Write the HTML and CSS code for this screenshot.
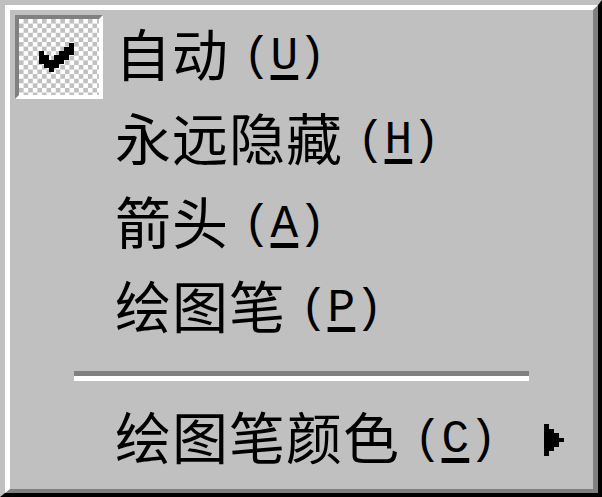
FILE: index.html
```html
<!DOCTYPE html>
<html>
<head>
    <meta charset="utf-8">
    <title>墨迹菜单</title>
    <link rel="stylesheet" href="styles.css">
</head>
<body>

<div class="menu">
    <div class="menu-inner">
        <div class="item">
            <span class="check-cell checked">
                <svg class="check" viewBox="0 0 7 7" preserveAspectRatio="none" shape-rendering="crispEdges">
                    <path d="M6 0H7V3H6V4H5V5H4V6H3V7H2V6H1V5H0V2H1V3H2V4H3V3H4V2H5V1H6Z" fill="#000"/>
                </svg>
            </span>
            <span class="label">自动</span><span class="key">(<u>U</u>)</span>
        </div>
        <div class="item">
            <span class="check-cell"></span>
            <span class="label">永远隐藏</span><span class="key">(<u>H</u>)</span>
        </div>
        <div class="item">
            <span class="check-cell"></span>
            <span class="label">箭头</span><span class="key">(<u>A</u>)</span>
        </div>
        <div class="item">
            <span class="check-cell"></span>
            <span class="label">绘图笔</span><span class="key">(<u>P</u>)</span>
        </div>

        <div class="separator"></div>

        <div class="item">
            <span class="check-cell"></span>
            <span class="label">绘图笔颜色</span><span class="key">(<u>C</u>)</span>
            <svg class="arrow" viewBox="0 0 4 7" preserveAspectRatio="none" shape-rendering="crispEdges">
                <path d="M0 0H1V1H2V2H3V3H4V4H3V5H2V6H1V7H0Z" fill="#000"/>
            </svg>
        </div>
    </div>
</div>

</body>
</html>
```

FILE: styles.css
```css
html, body {
    margin: 0;
    padding: 0;
    background: #c0c0c0;
}
.menu {
    width: 602px;
    height: 497px;
    box-sizing: border-box;
    border-top: 5px solid #c0c0c0;
    border-left: 5px solid #c0c0c0;
    border-right: 4px solid #000;
    border-bottom: 4px solid #000;
    background: #c0c0c0;
}
.menu-inner {
    height: 100%;
    box-sizing: border-box;
    border-top: 5px solid #fff;
    border-left: 5px solid #fff;
    border-right: 5px solid #808080;
    border-bottom: 4px solid #808080;
    padding: 5px 0 0 5px;
    color: #000;
}
.item {
    display: flex;
    align-items: center;
    height: 84px;
    padding-right: 29px;
}
.check-cell {
    width: 88px;
    height: 84px;
    flex: none;
    box-sizing: border-box;
    display: flex;
    align-items: center;
    justify-content: center;
}
.check-cell.checked {
    border-top: 4px solid #808080;
    border-left: 4px solid #808080;
    border-right: 4px solid #fff;
    border-bottom: 4px solid #fff;
    background: repeating-conic-gradient(#c0c0c0 0 25%, #fff 0 50%) 0 0 / 9.2px 9.2px;
}
.check {
    width: 35px;
    height: 29px;
    margin-left: -6px;
}
.label {
    margin-left: 12px;
    margin-bottom: 10px;
    font-family: "Noto Sans CJK SC", sans-serif;
    font-size: 56px;
    line-height: 1;
    letter-spacing: 1px;
}
.key {
    margin-left: 14px;
    font-family: "Liberation Mono", monospace;
    font-size: 46px;
    line-height: 1;
}
.key u {
    text-decoration-thickness: 5px;
    text-underline-offset: 6px;
}
.arrow {
    width: 20px;
    height: 32px;
    margin-left: auto;
}
.separator {
    height: 47px;
    margin: 0 64px 0 59px;
    box-sizing: border-box;
    padding-top: 20px;
}
.separator::before {
    content: "";
    display: block;
    height: 5px;
    background: #808080;
    border-bottom: 5px solid #fff;
}
```
